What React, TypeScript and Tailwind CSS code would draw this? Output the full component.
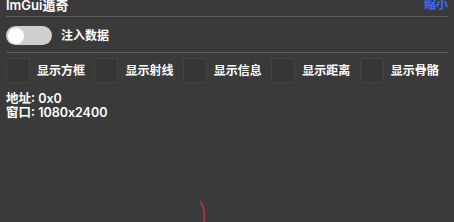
import React from "react";

const opcoes = ["显示方框", "显示射线", "显示信息", "显示距离", "显示骨骼"];

export default function App() {
  return (
    <div
      className="relative h-[222px] w-[454px] overflow-hidden bg-[#3a3a3a] text-white"
      style={{ fontFamily: '"Inter", "Noto Sans CJK SC", sans-serif' }}
    >
      <div className="-mt-[5px] flex items-center justify-between px-[6px]">
        <span className="text-[13px] font-semibold leading-[20px]">ImGui遁奇</span>
        <span className="text-[12px] font-semibold leading-[20px] text-[#3d6bff]">缩小</span>
      </div>
      <div className="mx-[6px] mt-[1px] h-px bg-[#5c5c5c]" />

      <div className="flex items-center gap-[9px] px-[6px] pt-[9px]">
        <div className="flex h-[19px] w-[46px] items-center rounded-full bg-[#cfcfcf] px-[2px]">
          <div className="h-[16px] w-[16px] rounded-full bg-white" />
        </div>
        <span className="text-[12px] font-semibold">注入数据</span>
      </div>
      <div className="mx-[6px] mt-[7px] h-px bg-[#5c5c5c]" />

      <div className="flex px-[6px] pt-[5px]">
        {opcoes.map((o) => (
          <div key={o} className="flex w-[90px] items-center gap-[7px]">
            <div className="h-[25px] w-[24px] rounded-[2px] border border-[#444] bg-[#363636]" />
            <span className="text-[12px] font-semibold">{o}</span>
          </div>
        ))}
      </div>

      <div className="px-[6px] pt-[9px] text-[12.5px] font-semibold leading-[14px]">
        <p>地址: 0x0</p>
        <p>窗口: 1080x2400</p>
      </div>

      <svg className="absolute left-[196px] top-[200px]" width="14" height="22" viewBox="0 0 14 22">
        <path d="M4 1 C8 6 9 14 8 22" stroke="#c0304a" strokeWidth="1.6" fill="none" />
      </svg>
    </div>
  );
}
